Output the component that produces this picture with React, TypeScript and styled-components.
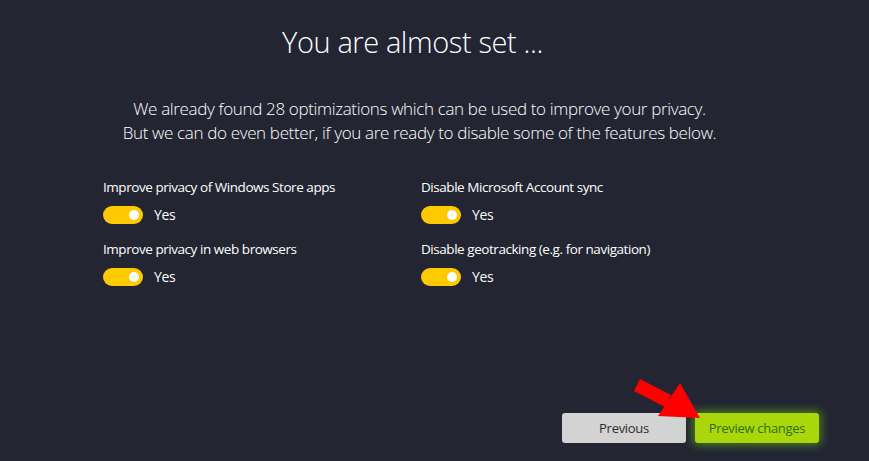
import styled, { createGlobalStyle } from "styled-components";

const GlobalStyle = createGlobalStyle`
  html, body {
    margin: 0;
    padding: 0;
    background: #232533;
  }
  * {
    box-sizing: border-box;
  }
`;

const Page = styled.div`
  position: relative;
  width: 869px;
  height: 461px;
  background: #232533;
  color: #ffffff;
  font-family: "Open Sans", "Noto Sans", sans-serif;
  display: flex;
  flex-direction: column;
  overflow: hidden;
`;

const Title = styled.h1`
  margin: 24px 44px 0 0;
  font-size: 29px;
  font-weight: 300;
  line-height: 36px;
  text-align: center;
  letter-spacing: -0.4px;
`;

const Intro = styled.p`
  margin: 37px 30px 0 0;
  font-size: 17px;
  font-weight: 300;
  line-height: 24px;
  text-align: center;
  letter-spacing: -0.35px;
`;

const Options = styled.div`
  display: grid;
  grid-template-columns: 318px 318px;
  row-gap: 14px;
  margin: 32px 0 0 103px;
`;

const Option = styled.div`
  display: flex;
  flex-direction: column;
  gap: 8px;
`;

const OptionLabel = styled.div`
  font-size: 13.5px;
  line-height: 20px;
  letter-spacing: -0.45px;
`;

const ToggleRow = styled.div`
  display: flex;
  align-items: center;
  gap: 11px;
  height: 20px;
`;

const Switch = styled.div<{ on?: boolean }>`
  position: relative;
  width: 40px;
  height: 18px;
  border-radius: 9px;
  background: ${(p) => (p.on ? "#ffc900" : "#55586a")};

  &::after {
    content: "";
    position: absolute;
    top: 4px;
    left: ${(p) => (p.on ? "26px" : "4px")};
    width: 10px;
    height: 10px;
    border-radius: 50%;
    background: #ffffff;
  }
`;

const SwitchText = styled.span`
  font-size: 14px;
  line-height: 20px;
  letter-spacing: -0.3px;
`;

const Footer = styled.div`
  margin-top: auto;
  display: flex;
  justify-content: flex-end;
  gap: 9px;
  padding: 0 50px 18px 0;
`;

const Button = styled.button<{ primary?: boolean }>`
  width: 124px;
  height: 30px;
  border: none;
  border-radius: 3px;
  font-family: "Open Sans", "Noto Sans", sans-serif;
  font-size: 13px;
  letter-spacing: -0.3px;
  cursor: pointer;
  background: ${(p) => (p.primary ? "#a9d70b" : "#d3d3d3")};
  color: ${(p) => (p.primary ? "#2f6f08" : "#2e2e2e")};
  box-shadow: ${(p) =>
    p.primary ? "0 0 10px 2px rgba(110, 210, 20, 0.55)" : "none"};
`;

const Pointer = styled.svg`
  position: absolute;
  left: 620px;
  top: 370px;
  width: 90px;
  height: 55px;
  pointer-events: none;
`;

const options = [
  "Improve privacy of Windows Store apps",
  "Disable Microsoft Account sync",
  "Improve privacy in web browsers",
  "Disable geotracking (e.g. for navigation)",
];

export default function App() {
  return (
    <>
      <GlobalStyle />
      <Page>
        <Title>You are almost set ...</Title>
        <Intro>
          We already found 28 optimizations which can be used to improve your
          privacy.
          <br />
          But we can do even better, if you are ready to disable some of the
          features below.
        </Intro>
        <Options>
          {options.map((label) => (
            <Option key={label}>
              <OptionLabel>{label}</OptionLabel>
              <ToggleRow>
                <Switch on />
                <SwitchText>Yes</SwitchText>
              </ToggleRow>
            </Option>
          ))}
        </Options>
        <Footer>
          <Button>Previous</Button>
          <Button primary>Preview changes</Button>
        </Footer>
        <Pointer viewBox="620 370 90 55">
          <polygon
            points="640,379 634,391 665,407 671,395"
            fill="#ff0000"
          />
          <polygon points="680,383 700,418 658,416" fill="#ff0000" />
        </Pointer>
      </Page>
    </>
  );
}
